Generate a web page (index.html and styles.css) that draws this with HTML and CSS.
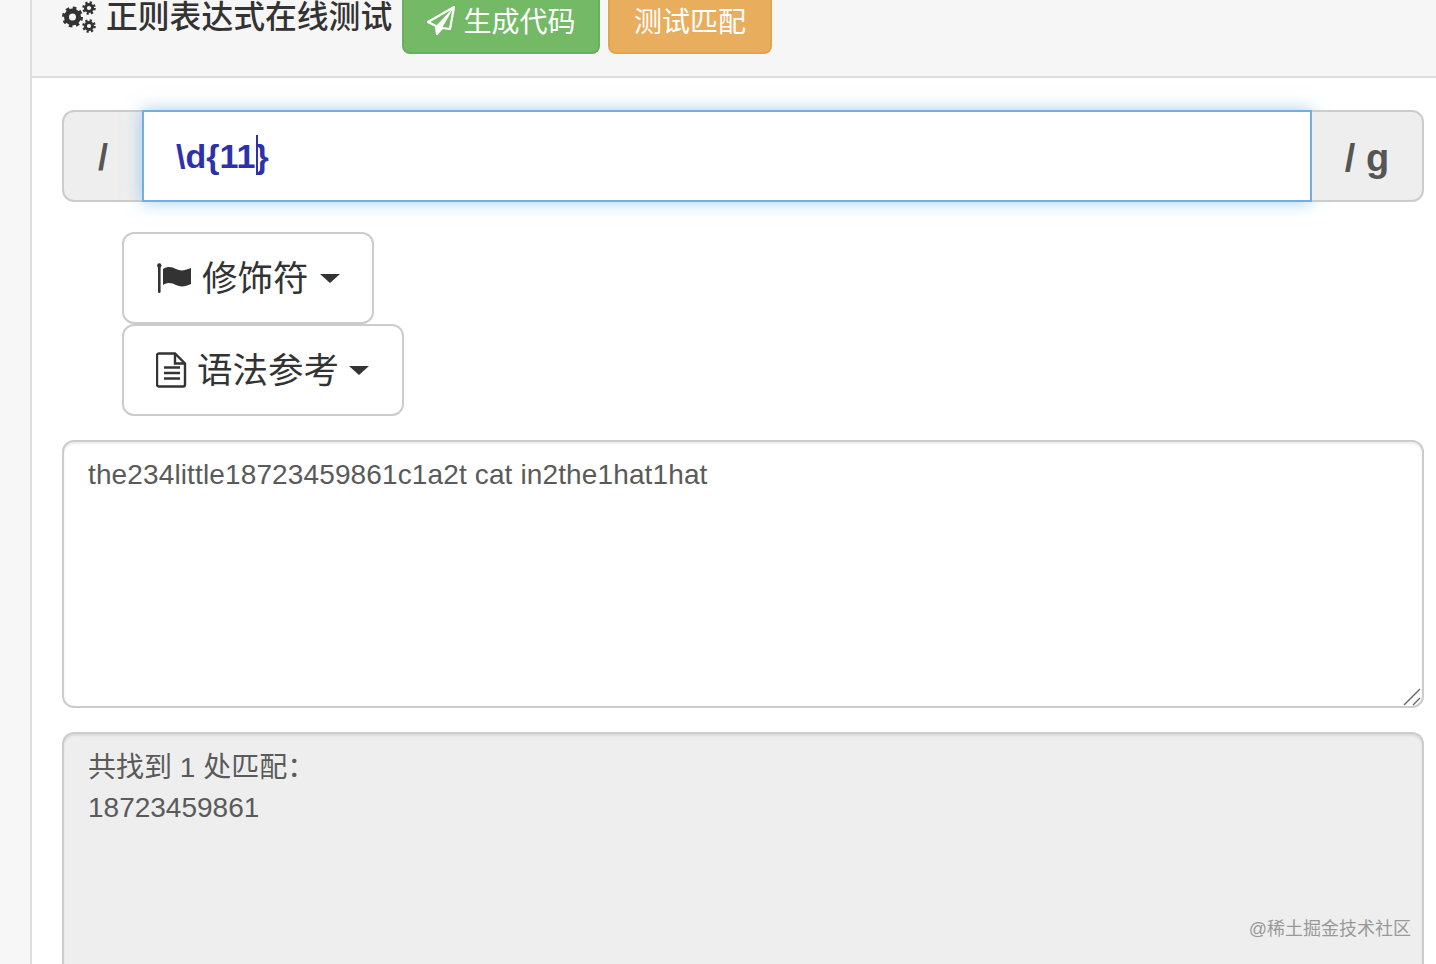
FILE: index.html
```html
<!DOCTYPE html>
<html lang="zh">
<head>
<meta charset="utf-8">
<title>正则表达式在线测试</title>
<link rel="stylesheet" href="styles.css">
</head>
<body>
<main class="panel">
  <header class="panel-head">
    <h1 class="title">
      <svg class="gears" viewBox="0 0 34 32" width="34" height="32" fill="none" stroke="#333" aria-hidden="true">
        <circle cx="10.500" cy="16" r="6" stroke-width="5"/>
        <circle cx="10.500" cy="16" r="9" stroke-width="3" stroke-dasharray="3.500 3.570"/>
        <circle cx="27" cy="7" r="3.600" stroke-width="3"/>
        <circle cx="27" cy="7" r="5.600" stroke-width="2.400" stroke-dasharray="2.200 2.200"/>
        <circle cx="27" cy="25" r="3.600" stroke-width="3"/>
        <circle cx="27" cy="25" r="5.600" stroke-width="2.400" stroke-dasharray="2.200 2.200"/>
      </svg>
      <span>正则表达式在线测试</span>
    </h1>
    <button class="btn btn-green" type="button">
      <svg class="plane" viewBox="0 0 30 30" width="30" height="30" aria-hidden="true">
        <path d="M28 2 2 17l8 4 1 8 5-6 8 1z" fill="none" stroke="#fff" stroke-width="2.200" stroke-linejoin="round"/>
        <path d="M28 2 10 21l1 8 5-6z" fill="#fff"/>
      </svg>
      <span>生成代码</span>
    </button>
    <button class="btn btn-orange" type="button">测试匹配</button>
  </header>
  <div class="panel-body">
    <div class="regex-group">
      <span class="addon addon-left">/</span>
      <div class="regex-input"><span class="regex-text">\d{11<i class="caret"></i>}</span></div>
      <span class="addon addon-right">/ g</span>
    </div>
    <div class="dropdowns">
      <button class="dd dd-flag" type="button">
        <svg class="flag" viewBox="0 0 36 32" width="36" height="32" aria-hidden="true">
          <rect x="2" y="4" width="2.600" height="27" rx="1.300" fill="#333"/>
          <circle cx="3.300" cy="3.500" r="2.200" fill="#333"/>
          <path d="M7 7c5-3 9-2 13 0s8 2 15-1v16c-6 3-11 3-15 1s-8-3-13 0z" fill="#333"/>
        </svg>
        <span class="dd-label">修饰符</span><i class="tri"></i>
      </button>
      <button class="dd dd-doc" type="button">
        <svg class="doc" viewBox="0 0 32 36" width="32" height="36" aria-hidden="true">
          <path d="M3 1.500h16l10 10v21a2 2 0 0 1-2 2H3a2 2 0 0 1-2-2v-29a2 2 0 0 1 2-2z" fill="none" stroke="#333" stroke-width="2.400"/>
          <path d="M19 1.500v10h10" fill="none" stroke="#333" stroke-width="2.400"/>
          <path d="M8 15.500h16M8 21h16M8 26.500h16" stroke="#333" stroke-width="2.400"/>
        </svg>
        <span class="dd-label">语法参考</span><i class="tri"></i>
      </button>
    </div>
    <div class="source-wrap">
      <textarea class="source" spellcheck="false">the234little18723459861c1a2t cat in2the1hat1hat</textarea>
      <svg class="grip" viewBox="0 0 18 18" width="18" height="18" aria-hidden="true">
        <path d="M1 17 17 1M10 17l7-7" stroke="#666" stroke-width="1.400" fill="none"/>
      </svg>
    </div>
    <div class="result">
      <div>共找到 1 处匹配：</div>
      <div>18723459861</div>
    </div>
  </div>
</main>
<div class="watermark">@稀土掘金技术社区</div>
</body>
</html>
```
FILE: styles.css
```css
* { box-sizing: border-box; }
html, body { height: 100%; overflow: hidden; }
body {
  margin: 0;
  background: #f7f7f7;
  color: #555;
  font-family: "Liberation Sans", "Noto Sans CJK SC", sans-serif;
}
.panel {
  margin-left: 30px;
  height: 964px;
  overflow: hidden;
  background: #fff;
  border-left: 2px solid #ddd;
}
.panel-head {
  height: 78px;
  display: flex;
  align-items: flex-start;
  padding-left: 30px;
  background: #f6f6f6;
  border-bottom: 2px solid #ddd;
}
.title {
  margin: 0 9px 0 0;
  width: 331px;
  height: 34px;
  display: flex;
  align-items: center;
  gap: 10px;
  font-size: 31.800px;
  font-weight: 500;
  line-height: 34px;
  color: #333;
  white-space: nowrap;
}
.gears { flex: none; }
.btn {
  height: 54px;
  margin: 0 8px 0 0;
  padding: 0 0 12px;
  display: flex;
  align-items: center;
  justify-content: center;
  gap: 7px;
  border: 2px solid;
  border-top: 0;
  border-radius: 0 0 8px 8px;
  color: #fff;
  white-space: nowrap;
  flex: none;
  font: 28px "Liberation Sans", "Noto Sans CJK SC", sans-serif;
}
.btn-green { width: 198px; background: #73b966; border-color: #6aaf5c; }
.btn-orange { width: 164px; background: #e8ae5e; border-color: #e6a34f; }
.panel-body { padding: 32px 12px 0 30px; }
.regex-group {
  display: flex;
  height: 92px;
}
.addon {
  display: flex;
  align-items: center;
  justify-content: center;
  background: #eee;
  border: 2px solid #ccc;
  color: #555;
  font-weight: 700;
}
.addon-left {
  width: 80px;
  border-right: 0;
  border-radius: 12px 0 0 12px;
  font-size: 36px;
  padding-top: 4px;
}
.addon-right {
  width: 112px;
  border-left: 0;
  border-radius: 0 12px 12px 0;
  font-size: 38px;
  padding-top: 4px;
}
.regex-input {
  flex: 1;
  display: flex;
  align-items: center;
  padding-left: 32px;
  background: #fff;
  border: 2px solid #74ade0;
  box-shadow: 0 0 16px rgba(102, 175, 233, .6);
}
.regex-text {
  position: relative;
  font-size: 34px;
  font-weight: 700;
  color: #2e31ae;
}
.caret {
  position: absolute;
  top: -2px;
  margin-left: 1px;
  width: 2px;
  height: 40px;
  background: #2e31ae;
}
.dropdowns {
  padding: 30px 0 0 60px;
  display: flex;
  flex-direction: column;
  align-items: flex-start;
}
.dd {
  height: 92px;
  display: flex;
  align-items: center;
  padding: 0 0 0 32px;
  background: #fff;
  border: 2px solid #ccc;
  border-radius: 12px;
  color: #333;
  white-space: nowrap;
  font: 35.500px "Liberation Sans", "Noto Sans CJK SC", sans-serif;
}
.dd-flag { width: 252px; gap: 10px; }
.dd-doc { width: 282px; gap: 9px; }
.dd-label { padding-bottom: 6px; }
.tri {
  width: 0;
  height: 0;
  margin-left: 1px;
  border-top: 9px solid #333;
  border-left: 10px solid transparent;
  border-right: 10px solid transparent;
}
.source-wrap {
  position: relative;
  margin-top: 24px;
}
.source {
  display: block;
  width: 100%;
  height: 268px;
  padding: 13px 24px;
  background: #fff;
  border: 2px solid #ccc;
  border-radius: 12px;
  outline: 0;
  resize: none;
  color: #5a5a5a;
  letter-spacing: .13px;
  font: 28px/40px "Liberation Sans", "Noto Sans CJK SC", sans-serif;
  box-shadow: inset 0 2px 2px rgba(0, 0, 0, .08);
}
.grip {
  position: absolute;
  right: 3px;
  bottom: 2px;
}
.result {
  height: 234px;
  margin-top: 24px;
  padding: 14px 24px 0;
  background: #eee;
  border: 2px solid #ccc;
  border-bottom: 0;
  border-radius: 12px 12px 0 0;
  color: #5a5a5a;
  font-size: 28px;
  line-height: 40px;
  box-shadow: inset 0 2px 2px rgba(0, 0, 0, .08);
}
.watermark {
  position: absolute;
  right: 25px;
  top: 917px;
  font-size: 18px;
  line-height: 24px;
  color: #999;
  white-space: nowrap;
}
```
